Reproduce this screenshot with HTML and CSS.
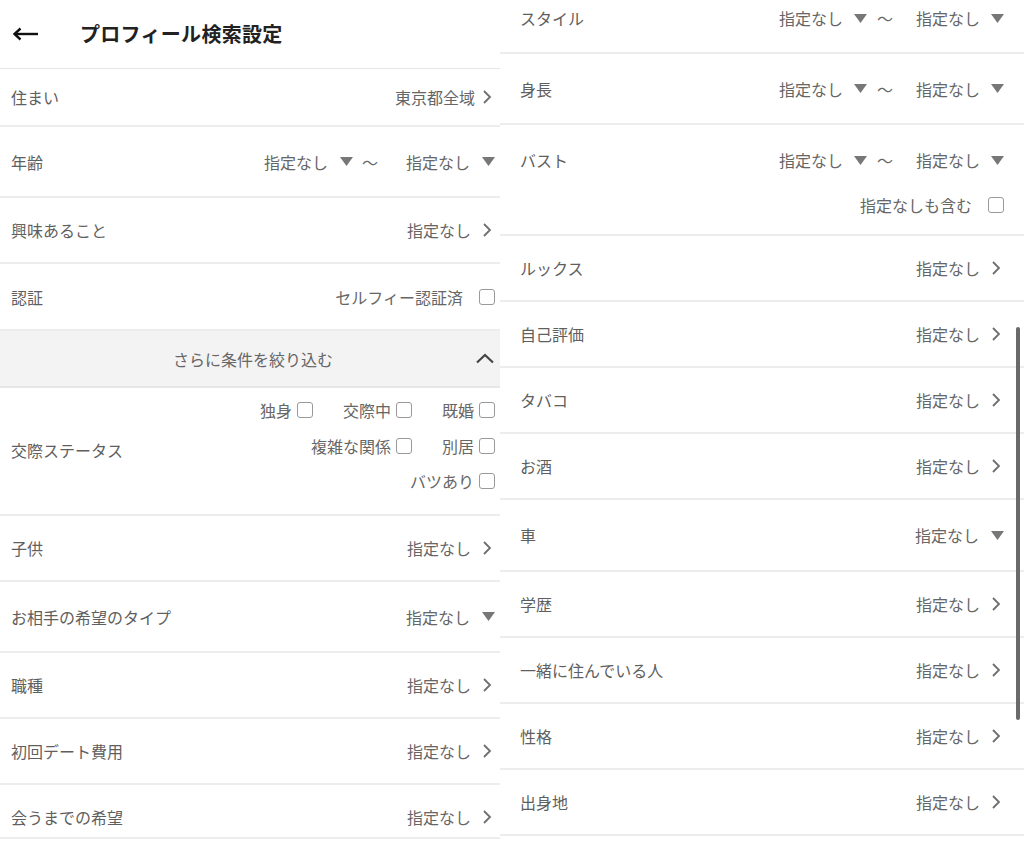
FILE: index.html
```html
<!DOCTYPE html>
<html lang="ja">
<head>
<meta charset="utf-8">
<title>プロフィール検索設定</title>
<link rel="stylesheet" href="styles.css">
</head>
<body>
<div class="page">
  <div class="clip">
    <div class="panel panel--shift">
      <header class="header">
        <svg class="back" width="26" height="14" viewBox="0 0 26 14"><path d="M26 7H3" stroke="#111" stroke-width="2.4" fill="none"/><path d="M8.5 1.5L2.5 7L8.5 12.5" stroke="#111" stroke-width="2.4" fill="none"/></svg>
        <h1 class="title">プロフィール検索設定</h1>
      </header>
      <div class="row h58"><span class="label">住まい</span><span class="value">東京都全域<svg class="chev chev--near" width="10" height="16" viewBox="0 0 10 16"><path d="M2 2L8 8L2 14" stroke="#6e6e6e" stroke-width="1.8" fill="none"/></svg></span></div>
      <div class="row h71"><span class="label">年齢</span><span class="range range--wide"><span class="value">指定なし<svg class="tri" width="13" height="9" viewBox="0 0 13 9"><path d="M0 0H13L6.5 9Z" fill="#777"/></svg></span><span class="tilde">〜</span><span class="value">指定なし<svg class="tri" width="13" height="9" viewBox="0 0 13 9"><path d="M0 0H13L6.5 9Z" fill="#777"/></svg></span></span></div>
      <div class="row h66"><span class="label">興味あること</span><span class="value">指定なし<svg class="chev" width="10" height="16" viewBox="0 0 10 16"><path d="M2 2L8 8L2 14" stroke="#6e6e6e" stroke-width="1.8" fill="none"/></svg></span></div>
      <div class="row h67"><span class="label">認証</span><span class="check check--wide">セルフィー認証済<span class="box"></span></span></div>
      <div class="more"><span></span><span class="more-text">さらに条件を絞り込む</span><svg class="up" width="20" height="11" viewBox="0 0 20 11"><path d="M2 9.5L10 2L18 9.5" stroke="#444" stroke-width="2.2" fill="none"/></svg></div>
      <div class="row h128 row--top"><span class="label label--mid">交際ステータス</span>
        <div class="opts">
          <div class="opt-line"><span class="check">独身<span class="box"></span></span><span class="check">交際中<span class="box"></span></span><span class="check">既婚<span class="box"></span></span></div>
          <div class="opt-line"><span class="check">複雑な関係<span class="box"></span></span><span class="check">別居<span class="box"></span></span></div>
          <div class="opt-line"><span class="check">バツあり<span class="box"></span></span></div>
        </div>
      </div>
      <div class="row h66"><span class="label">子供</span><span class="value">指定なし<svg class="chev" width="10" height="16" viewBox="0 0 10 16"><path d="M2 2L8 8L2 14" stroke="#6e6e6e" stroke-width="1.8" fill="none"/></svg></span></div>
      <div class="row h71"><span class="label">お相手の希望のタイプ</span><span class="value">指定なし<svg class="tri tri--far" width="13" height="9" viewBox="0 0 13 9"><path d="M0 0H13L6.5 9Z" fill="#777"/></svg></span></div>
      <div class="row h66"><span class="label">職種</span><span class="value">指定なし<svg class="chev" width="10" height="16" viewBox="0 0 10 16"><path d="M2 2L8 8L2 14" stroke="#6e6e6e" stroke-width="1.8" fill="none"/></svg></span></div>
      <div class="row h66"><span class="label">初回デート費用</span><span class="value">指定なし<svg class="chev" width="10" height="16" viewBox="0 0 10 16"><path d="M2 2L8 8L2 14" stroke="#6e6e6e" stroke-width="1.8" fill="none"/></svg></span></div>
      <div class="row h54 row--low"><span class="label">会うまでの希望</span><span class="value">指定なし<svg class="chev" width="10" height="16" viewBox="0 0 10 16"><path d="M2 2L8 8L2 14" stroke="#6e6e6e" stroke-width="1.8" fill="none"/></svg></span></div>
    </div>
  </div>

  <div class="panel panel--right">
    <div class="row h54 row--cut"><span class="label">スタイル</span><span class="range"><span class="value">指定なし<svg class="tri" width="13" height="9" viewBox="0 0 13 9"><path d="M0 0H13L6.5 9Z" fill="#777"/></svg></span><span class="tilde">〜</span><span class="value">指定なし<svg class="tri" width="13" height="9" viewBox="0 0 13 9"><path d="M0 0H13L6.5 9Z" fill="#777"/></svg></span></span></div>
    <div class="row h71"><span class="label">身長</span><span class="range"><span class="value">指定なし<svg class="tri" width="13" height="9" viewBox="0 0 13 9"><path d="M0 0H13L6.5 9Z" fill="#777"/></svg></span><span class="tilde">〜</span><span class="value">指定なし<svg class="tri" width="13" height="9" viewBox="0 0 13 9"><path d="M0 0H13L6.5 9Z" fill="#777"/></svg></span></span></div>
    <div class="row h111 row--stack">
      <div class="line"><span class="label">バスト</span><span class="range"><span class="value">指定なし<svg class="tri" width="13" height="9" viewBox="0 0 13 9"><path d="M0 0H13L6.5 9Z" fill="#777"/></svg></span><span class="tilde">〜</span><span class="value">指定なし<svg class="tri" width="13" height="9" viewBox="0 0 13 9"><path d="M0 0H13L6.5 9Z" fill="#777"/></svg></span></span></div>
      <div class="line line--end"><span class="check check--wide">指定なしも含む<span class="box"></span></span></div>
    </div>
    <div class="row h66"><span class="label">ルックス</span><span class="value">指定なし<svg class="chev" width="10" height="16" viewBox="0 0 10 16"><path d="M2 2L8 8L2 14" stroke="#6e6e6e" stroke-width="1.8" fill="none"/></svg></span></div>
    <div class="row h66"><span class="label">自己評価</span><span class="value">指定なし<svg class="chev" width="10" height="16" viewBox="0 0 10 16"><path d="M2 2L8 8L2 14" stroke="#6e6e6e" stroke-width="1.8" fill="none"/></svg></span></div>
    <div class="row h66"><span class="label">タバコ</span><span class="value">指定なし<svg class="chev" width="10" height="16" viewBox="0 0 10 16"><path d="M2 2L8 8L2 14" stroke="#6e6e6e" stroke-width="1.8" fill="none"/></svg></span></div>
    <div class="row h66"><span class="label">お酒</span><span class="value">指定なし<svg class="chev" width="10" height="16" viewBox="0 0 10 16"><path d="M2 2L8 8L2 14" stroke="#6e6e6e" stroke-width="1.8" fill="none"/></svg></span></div>
    <div class="row h72"><span class="label">車</span><span class="value">指定なし<svg class="tri tri--far" width="13" height="9" viewBox="0 0 13 9"><path d="M0 0H13L6.5 9Z" fill="#777"/></svg></span></div>
    <div class="row h66"><span class="label">学歴</span><span class="value">指定なし<svg class="chev" width="10" height="16" viewBox="0 0 10 16"><path d="M2 2L8 8L2 14" stroke="#6e6e6e" stroke-width="1.8" fill="none"/></svg></span></div>
    <div class="row h66"><span class="label">一緒に住んでいる人</span><span class="value">指定なし<svg class="chev" width="10" height="16" viewBox="0 0 10 16"><path d="M2 2L8 8L2 14" stroke="#6e6e6e" stroke-width="1.8" fill="none"/></svg></span></div>
    <div class="row h66"><span class="label">性格</span><span class="value">指定なし<svg class="chev" width="10" height="16" viewBox="0 0 10 16"><path d="M2 2L8 8L2 14" stroke="#6e6e6e" stroke-width="1.8" fill="none"/></svg></span></div>
    <div class="row h66"><span class="label">出身地</span><span class="value">指定なし<svg class="chev" width="10" height="16" viewBox="0 0 10 16"><path d="M2 2L8 8L2 14" stroke="#6e6e6e" stroke-width="1.8" fill="none"/></svg></span></div>
    <div class="scrollbar"></div>
  </div>
</div>
</body>
</html>
```

FILE: styles.css
```css
* { box-sizing: border-box; }
html, body {
  margin: 0;
  padding: 0;
  background: #fff;
}
body {
  font-family: "Noto Sans CJK JP", "Noto Sans", sans-serif;
  font-size: 16px;
  line-height: 24px;
  color: #666;
  overflow: hidden;
}
.page {
  display: flex;
  width: 1024px;
  height: 846px;
  overflow: hidden;
}
.clip {
  width: 500px;
  flex: none;
  overflow: hidden;
}
.panel {
  width: 524px;
  flex: none;
  display: flex;
  flex-direction: column;
}
.panel--shift {
  margin-left: -9px;
}
.panel--right {
  position: relative;
  height: 846px;
}
.header {
  height: 69px;
  display: flex;
  align-items: center;
  padding-left: 21px;
  border-bottom: 1px solid #e6e6e6;
}
.back {
  flex: none;
  margin-top: -1px;
}
.title {
  margin: 0 0 0 42px;
  font-size: 20px;
  font-weight: 700;
  color: #222;
  line-height: 28px;
  letter-spacing: 0.3px;
}
.row {
  display: flex;
  align-items: center;
  justify-content: space-between;
  padding: 0 20px;
  border-bottom: 2px solid #ededed;
  flex: none;
}
.h54 { height: 54px; }
.h58 { height: 58px; }
.h66 { height: 66px; }
.h67 { height: 67px; }
.h71 { height: 71px; }
.h72 { height: 72px; }
.h111 { height: 111px; }
.h128 { height: 128px; }
.row--top { align-items: flex-start; }
.row--low { align-items: flex-start; padding-top: 20px; }
.row--cut { align-items: flex-start; padding-top: 6px; }
.label {
  color: #5f5f5f;
  white-space: nowrap;
}
.label--mid { align-self: center; margin-top: -2px; }
.value {
  display: inline-flex;
  align-items: center;
  color: #666;
  white-space: nowrap;
}
.chev {
  margin-left: 11px;
  margin-right: 3px;
  flex: none;
}
.chev--near { margin-left: 7px; }
.tri {
  margin-left: 11px;
  flex: none;
}
.tri--far { margin-left: 12px; }
.range {
  display: inline-flex;
  align-items: center;
}
.tilde {
  margin: 0 23px 0 10px;
  color: #666;
}
.range--wide .tilde { margin: 0 28px 0 9px; }
.range--wide .tri { margin-left: 12px; }
.check {
  display: inline-flex;
  align-items: center;
  color: #666;
  white-space: nowrap;
}
.box {
  display: inline-block;
  width: 16px;
  height: 16px;
  border: 1.5px solid #999;
  border-radius: 3px;
  margin-left: 5px;
  background: #fff;
}
.check--wide .box { margin-left: 16px; }
.more {
  height: 57px;
  display: grid;
  grid-template-columns: 1fr auto 1fr;
  align-items: center;
  padding: 0 20px;
  background: #f4f3f3;
  border-bottom: 2px solid #e6e6e6;
  flex: none;
}
.more-text {
  color: #666;
}
.up {
  justify-self: end;
  margin-right: 0;
}
.opts {
  display: flex;
  flex-direction: column;
  gap: 11.5px;
  padding-top: 10px;
}
.opt-line {
  display: flex;
  justify-content: flex-end;
  gap: 30px;
}
.row--stack {
  flex-direction: column;
  align-items: stretch;
  justify-content: flex-start;
  padding-top: 23px;
  gap: 21px;
}
.line {
  display: flex;
  align-items: center;
  justify-content: space-between;
}
.line--end {
  justify-content: flex-end;
}
.scrollbar {
  position: absolute;
  left: 516px;
  top: 327px;
  width: 4px;
  height: 393px;
  border-radius: 2px;
  background: #6a6a6a;
}
```
